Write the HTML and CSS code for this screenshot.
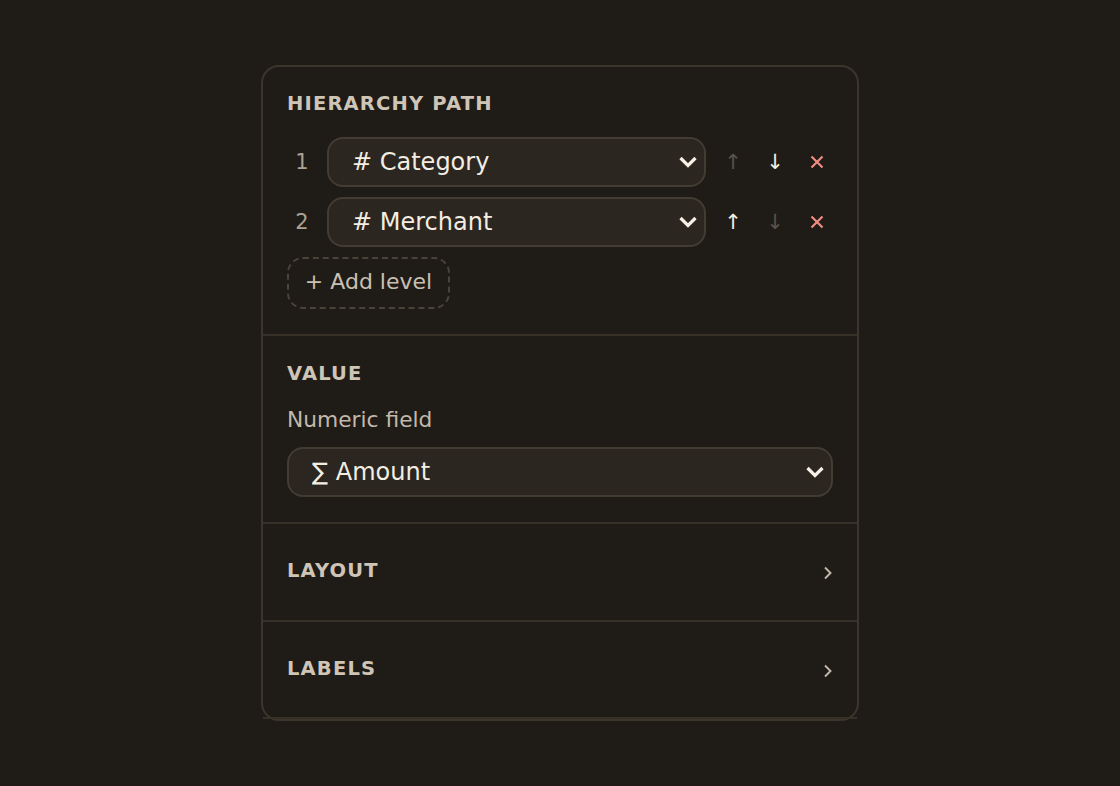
FILE: index.html
```html
<!DOCTYPE html>
<html>
<head>
  <title>Treemap settings</title>
  <link rel="stylesheet" href="styles.css">
</head>
<body>
  <div class="panel">
    <section class="section">
      <h2 class="heading">Hierarchy path</h2>
      <div class="levels">
        <div class="level">
          <span class="level-num">1</span>
          <div class="select-wrap">
            <select class="field-select"><option># Category</option></select>
            <svg class="select-arrow" width="20" height="12" viewBox="0 0 20 12"><path d="M2.5 2L10 9.5L17.5 2" /></svg>
          </div>
          <button class="icon-btn" disabled>↑</button>
          <button class="icon-btn">↓</button>
          <button class="icon-btn remove">
            <svg width="14" height="14" viewBox="0 0 14 14"><path d="M1.5 1.5L12.5 12.5M12.5 1.5L1.5 12.5" /></svg>
          </button>
        </div>
        <div class="level">
          <span class="level-num">2</span>
          <div class="select-wrap">
            <select class="field-select"><option># Merchant</option></select>
            <svg class="select-arrow" width="20" height="12" viewBox="0 0 20 12"><path d="M2.5 2L10 9.5L17.5 2" /></svg>
          </div>
          <button class="icon-btn">↑</button>
          <button class="icon-btn" disabled>↓</button>
          <button class="icon-btn remove">
            <svg width="14" height="14" viewBox="0 0 14 14"><path d="M1.5 1.5L12.5 12.5M12.5 1.5L1.5 12.5" /></svg>
          </button>
        </div>
        <div class="add-row">
          <button class="add-level">+ Add level</button>
        </div>
      </div>
    </section>

    <section class="section value">
      <h2 class="heading">Value</h2>
      <label class="field-label">Numeric field</label>
      <div class="select-wrap">
        <select class="field-select"><option>∑ Amount</option></select>
        <svg class="select-arrow" width="20" height="12" viewBox="0 0 20 12"><path d="M2.5 2L10 9.5L17.5 2" /></svg>
      </div>
    </section>

    <section class="section collapsed">
      <h2 class="heading">Layout</h2>
      <svg class="chevron" width="10" height="14" viewBox="0 0 10 14"><path d="M2 1.5L7.5 7L2 12.5" /></svg>
    </section>

    <section class="section collapsed last">
      <h2 class="heading">Labels</h2>
      <svg class="chevron" width="10" height="14" viewBox="0 0 10 14"><path d="M2 1.5L7.5 7L2 12.5" /></svg>
    </section>
  </div>
</body>
</html>
```

FILE: styles.css
```css
body {
  margin: 0;
  padding: 0;
  font-family: 'DejaVu Sans', sans-serif;
  background: #1f1b17;
  color: #f3ede2;
  display: flex;
  align-items: center;
  justify-content: center;
  min-height: 100vh;
}
.panel {
  width: 598px;
  box-sizing: border-box;
  border: 2px solid #3b352c;
  border-radius: 18px;
  background: #1f1b17;
}
.section {
  padding: 25px 24px;
  border-bottom: 2px solid #363027;
  display: flex;
  flex-direction: column;
}
.heading {
  margin: 0 0 22px;
  font-size: 19.5px;
  line-height: 23px;
  font-weight: bold;
  letter-spacing: 0.06em;
  text-transform: uppercase;
  color: #cec5b6;
}
.value .heading {
  margin-top: 1px;
  margin-bottom: 21px;
}
.levels {
  display: flex;
  flex-direction: column;
  gap: 10px;
}
.level {
  display: flex;
  align-items: center;
  gap: 10px;
}
.level-num {
  width: 30px;
  text-align: center;
  font-size: 21px;
  color: #aba293;
}
.select-wrap {
  position: relative;
  display: flex;
}
.level .select-wrap {
  flex: 1;
  margin-right: 1px;
}
.field-select {
  flex: 1;
  appearance: none;
  height: 50px;
  padding: 0 40px 0 23px;
  font-family: 'DejaVu Sans', sans-serif;
  font-size: 24px;
  color: #f3ede2;
  background: #2b2620;
  border: 2px solid #433c32;
  border-radius: 16px;
}
.select-arrow {
  position: absolute;
  right: 8px;
  top: 19px;
  stroke: #f6f0e4;
  stroke-width: 3.2;
  fill: none;
  pointer-events: none;
}
.icon-btn {
  width: 32px;
  height: 32px;
  padding: 0;
  background: none;
  border: none;
  font-family: 'DejaVu Sans', sans-serif;
  font-size: 21px;
  color: #f3ede2;
  cursor: pointer;
  display: flex;
  align-items: center;
  justify-content: center;
}
.icon-btn:disabled {
  color: #58524a;
  cursor: default;
}
.icon-btn.remove svg {
  stroke: #f08c84;
  stroke-width: 2.2;
  fill: none;
}
.add-row {
  display: flex;
}
.add-level {
  height: 52px;
  width: 163px;
  padding: 0 0 3px;
  font-family: 'DejaVu Sans', sans-serif;
  font-size: 22px;
  color: #c9c0b2;
  background: none;
  border: 2px dashed #4a4339;
  border-radius: 16px;
  cursor: pointer;
}
.field-label {
  font-size: 21.75px;
  line-height: 24px;
  color: #c2b9ab;
  margin: 2px 0 15px;
}
.section.collapsed {
  flex-direction: row;
  align-items: center;
  justify-content: space-between;
  padding: 35px 24px 38px;
}
.section.last {
  padding-bottom: 37px;
}
.collapsed .heading {
  margin: 0;
}
.chevron {
  margin-top: 5px;
  stroke: #c2b9ab;
  stroke-width: 1.9;
  fill: none;
}
```
